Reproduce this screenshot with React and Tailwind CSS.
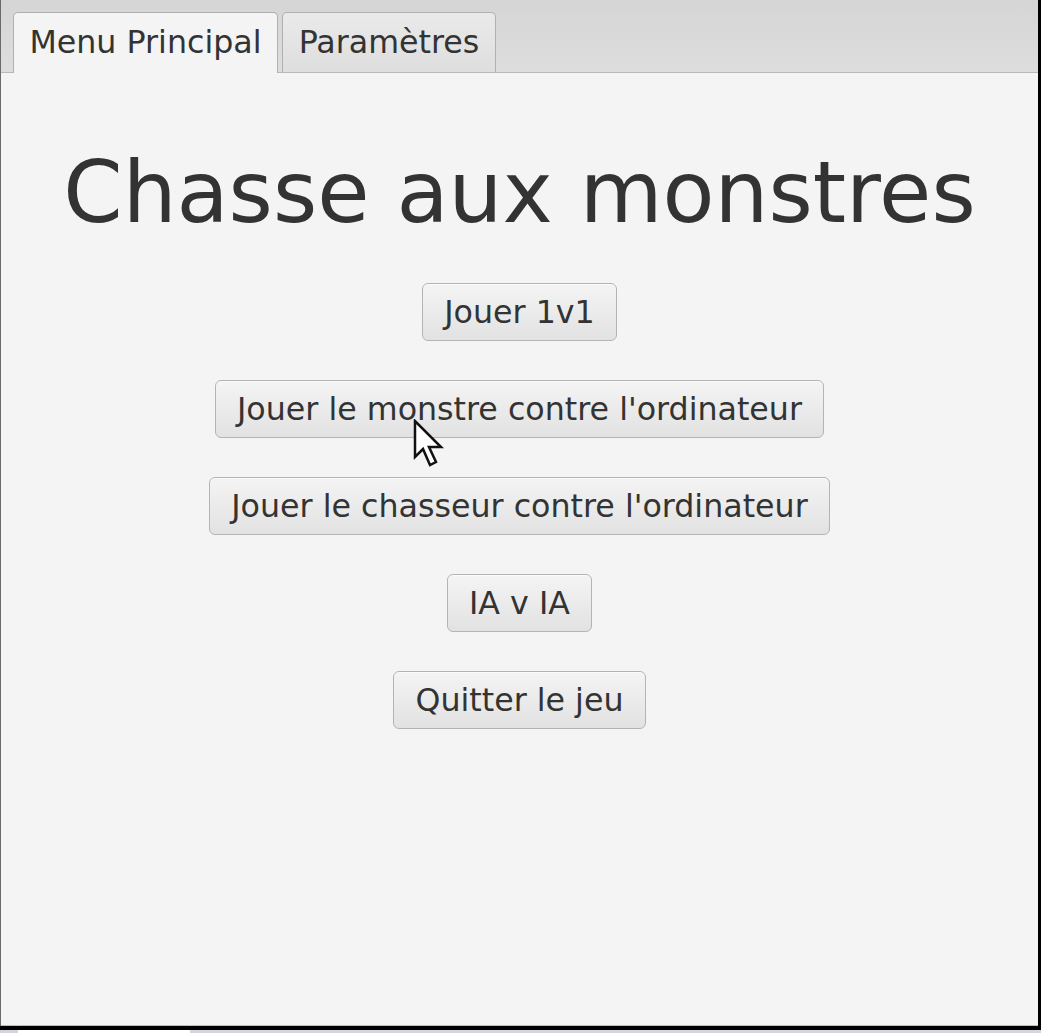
import React from 'react'

const font = { fontFamily: '"DejaVu Sans", "Liberation Sans", sans-serif' }

const buttons = [
  "Jouer 1v1",
  "Jouer le monstre contre l'ordinateur",
  "Jouer le chasseur contre l'ordinateur",
  "IA v IA",
  "Quitter le jeu",
]

function FxButton({ label }) {
  return (
    <button className="h-[58px] px-[21px] rounded-[6px] border border-[#b4b4b4] bg-gradient-to-b from-[#f4f4f4] to-[#e2e2e2] text-[31.7px] leading-[36px] text-[#333333] shadow-[inset_0_1px_0_#fbfbfb]">
      {label}
    </button>
  )
}

function Cursor() {
  return (
    <svg
      className="absolute left-[412px] top-[346px]"
      width="34"
      height="50"
      viewBox="0 0 34 50"
    >
      <path
        d="M2 2 L2 38 L10 30 L17 46 L23 43 L16 28 L28 28 Z"
        fill="#ffffff"
        stroke="#111111"
        strokeWidth="2.5"
        strokeLinejoin="miter"
      />
    </svg>
  )
}

export default function App() {
  return (
    <div className="w-[1041px] h-[1033px] bg-black flex flex-col overflow-hidden" style={font}>
      <div className="h-[1030px]">
        <div className="w-[1038px] h-[1026px] flex flex-col border-l border-[#6a6a6a]">
          {/* tab header */}
          <div className="h-[73px] bg-gradient-to-b from-[#d5d5d5] to-[#dddddd] border-b border-[#b9b9b9] flex items-end pl-[12px] gap-[4px]">
            <div className="h-[61px] w-[265px] -mb-px rounded-t-[5px] border border-b-0 border-[#b0b0b0] bg-[#f4f4f4] flex items-center justify-center text-[31.7px] text-[#333333]">
              Menu Principal
            </div>
            <div className="h-[60px] w-[214px] rounded-t-[5px] border border-b-0 border-[#b0b0b0] bg-gradient-to-b from-[#eaeaea] to-[#dedede] flex items-center justify-center text-[31.7px] text-[#333333]">
              Paramètres
            </div>
          </div>
          {/* content */}
          <div className="relative flex-1 bg-[#f4f4f4] border-b border-[#bdbdbd] flex flex-col items-center">
            <h1 className="mt-[70px] text-[85px] leading-[99px] text-[#333333] font-normal">
              Chasse aux monstres
            </h1>
            <div className="mt-[41px] flex flex-col items-center gap-[39px]">
              {buttons.map((b) => (
                <FxButton key={b} label={b} />
              ))}
            </div>
            <Cursor />
          </div>
        </div>
      </div>
      <div className="h-[3px] flex">
        <div className="w-[18px] bg-[#d4d4de]" />
        <div className="w-[172px] bg-white" />
        <div className="flex-1 bg-[#d6d6e0]" />
      </div>
    </div>
  )
}
